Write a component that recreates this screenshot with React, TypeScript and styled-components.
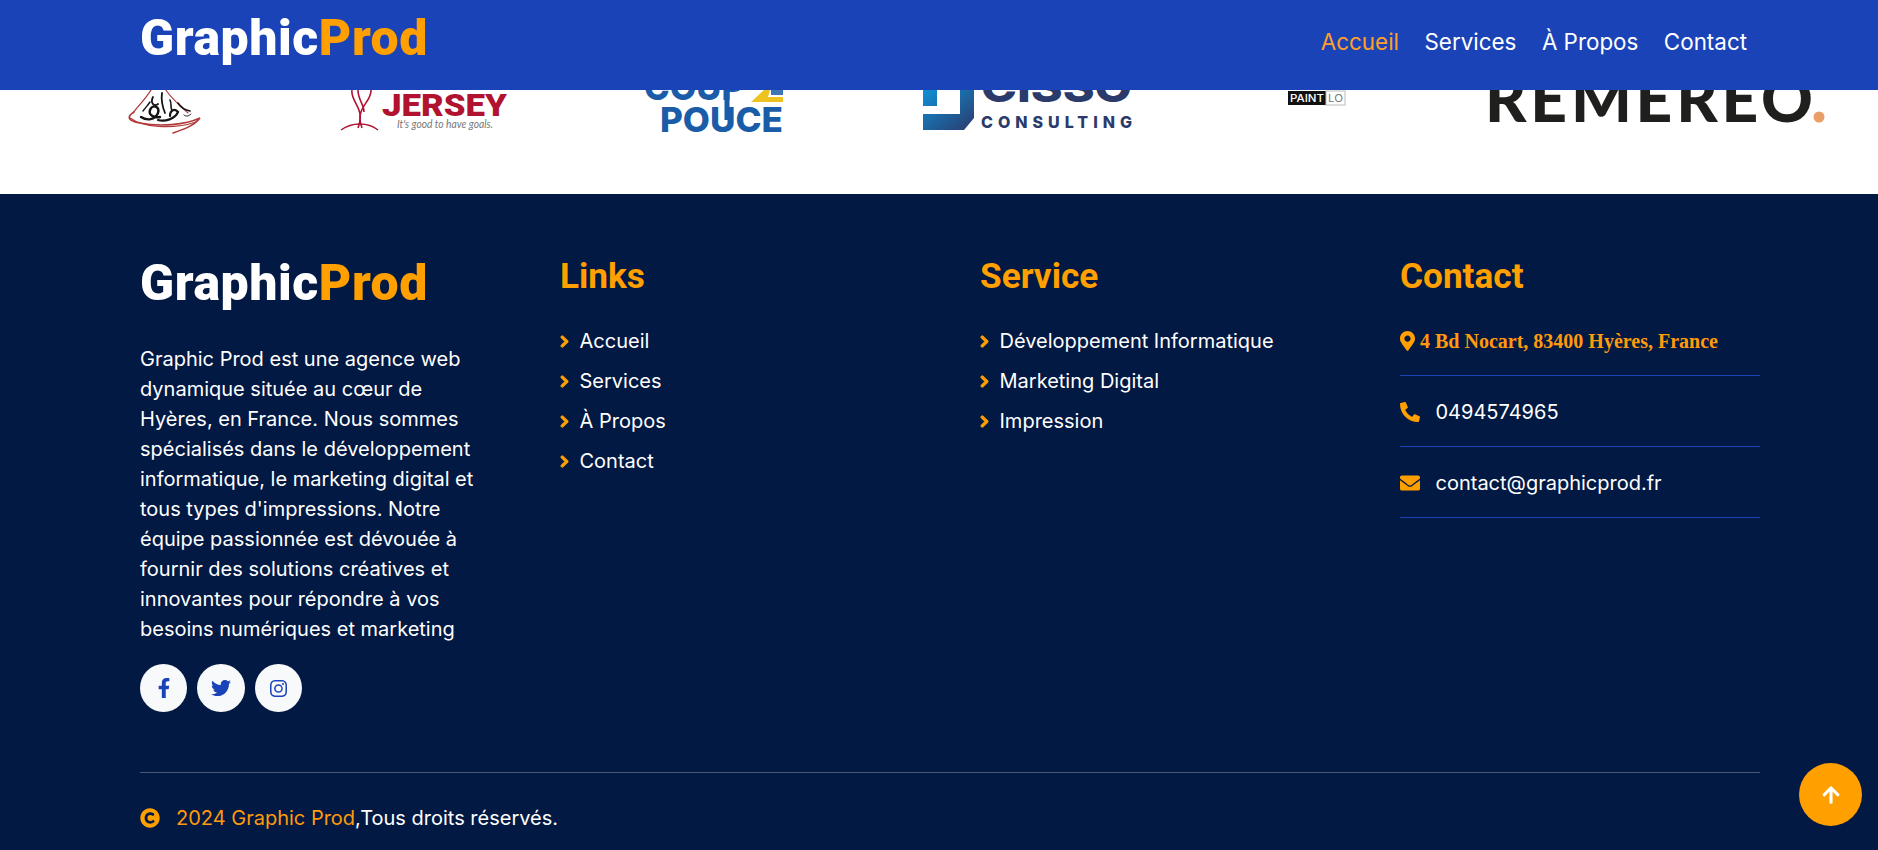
import React from "react";
import styled, { createGlobalStyle } from "styled-components";
import {
  FaChevronRight,
  FaMapMarkerAlt,
  FaPhoneAlt,
  FaEnvelope,
  FaFacebookF,
  FaTwitter,
  FaCopyright,
  FaArrowUp,
} from "react-icons/fa";
import { BsInstagram } from "react-icons/bs";

const ORANGE = "#ff9f00";
const BLUE = "#1a43b7";
const NAVY = "#021943";

const Global = createGlobalStyle`
  html, body { margin: 0; padding: 0; height: 850px; overflow: hidden; background: ${NAVY}; }
  * { box-sizing: border-box; }
  body { font-family: Inter, "Liberation Sans", sans-serif; color: #fff; }
`;

const Page = styled.div`
  width: 1878px;
  height: 850px;
  overflow: hidden;
  display: flex;
  flex-direction: column;
`;

const Header = styled.header`
  height: 90px;
  flex: none;
  background: ${BLUE};
  padding: 0 131px 0 140px;
  display: flex;
  align-items: center;
  justify-content: space-between;
  position: relative;
  z-index: 2;
`;

const Brand = styled.div`
  font-family: Roboto, sans-serif;
  font-weight: 900;
  font-size: 50px;
  line-height: 1;
  color: #fff;
  letter-spacing: 0.55px;
  span { color: ${ORANGE}; }
`;

const HeaderBrand = styled(Brand)`
  margin-top: -15px;
`;

const Nav = styled.nav`
  display: flex;
  gap: 25.5px;
`;

const NavLink = styled.a<{ $active?: boolean }>`
  font-size: 22.4px;
  line-height: 30px;
  margin-top: -7px;
  color: ${(p) => (p.$active ? "#ff9f2a" : "#fff")};
`;

const LogoStrip = styled.section`
  height: 104px;
  flex: none;
  background: #fff;
  overflow: hidden;
`;

const LogoArt = styled.svg`
  display: block;
  width: 1878px;
  height: 104px;
`;

const Footer = styled.footer`
  flex: 1;
  background: ${NAVY};
  padding: 56px 118px 0 140px;
`;

const Columns = styled.div`
  display: grid;
  grid-template-columns: repeat(4, 360px);
  column-gap: 60px;
  height: 522px;
`;

const Column = styled.div`
  display: flex;
  flex-direction: column;
  align-items: flex-start;
`;

const FooterBrand = styled(Brand)`
  margin-top: 8px;
`;

const About = styled.p`
  margin: 36px 0 0;
  width: 345px;
  font-size: 20px;
  line-height: 30px;
  color: #fff;
`;

const Socials = styled.div`
  display: flex;
  gap: 10px;
  margin-top: 20px;
`;

const SocialButton = styled.a<{ $width: number; $icon: number }>`
  width: ${(p) => p.$width}px;
  height: 48px;
  border-radius: 50%;
  background: #f8f9fa;
  color: ${BLUE};
  display: flex;
  align-items: center;
  justify-content: center;
  font-size: ${(p) => p.$icon}px;
`;

const Heading = styled.h3`
  margin: 1px 0 0;
  height: 50px;
  font-family: Roboto, sans-serif;
  font-weight: 700;
  font-size: 35.2px;
  line-height: 50px;
  color: ${ORANGE};
`;

const LinkList = styled.ul`
  list-style: none;
  margin: 25px 0 0;
  padding: 0;
  display: flex;
  flex-direction: column;
  gap: 10px;
`;

const LinkItem = styled.li`
  display: flex;
  align-items: center;
  gap: 10.5px;
  font-size: 20px;
  line-height: 30px;
  svg {
    color: ${ORANGE};
    width: 9px;
    height: 13px;
    stroke: currentColor;
    stroke-width: 50;
  }
`;

const ContactList = styled.div`
  margin-top: 25px;
  width: 100%;
`;

const ContactRow = styled.div`
  display: flex;
  align-items: center;
  height: 71px;
  padding-top: 1px;
  border-bottom: 1px solid ${BLUE};
  font-size: 20px;
  svg { color: ${ORANGE}; font-size: 20px; flex: none; }
`;

const FirstRow = styled(ContactRow)`
  height: 50px;
  padding-top: 0;
  padding-bottom: 18px;
  gap: 5px;
  font-family: "Liberation Serif", serif;
  font-weight: 700;
  font-size: 20px;
  color: #ff9a0d;
  svg { width: 15px; height: 20px; margin-top: -2px; }
`;

const IconSlot = styled.span`
  width: 35.5px;
  display: flex;
`;

const Bottom = styled.div`
  border-top: 1px solid #4a5672;
  padding-top: 30px;
  width: 1620px;
  display: flex;
  align-items: center;
  font-size: 20px;
  line-height: 30px;
  svg { color: ${ORANGE}; font-size: 20px; margin-right: 16px; }
  em { color: #ff9a0d; font-style: normal; }
`;

const ScrollTop = styled.button`
  position: fixed;
  left: 1799px;
  top: 763px;
  width: 63px;
  height: 63px;
  border: 0;
  border-radius: 50%;
  background: ${ORANGE};
  color: #fff;
  display: flex;
  align-items: center;
  justify-content: center;
  font-size: 20px;
  padding: 0;
`;

const Logos = () => (
  <LogoArt viewBox="0 90 1878 104">
    <defs>
      <linearGradient id="cissoG" x1="0" y1="0" x2="1" y2="1">
        <stop offset="0" stopColor="#0f90d6" />
        <stop offset="1" stopColor="#2b3a6b" />
      </linearGradient>
    </defs>

    {/* calligraphy */}
    <g fill="none" stroke="#b23a3a" strokeLinecap="round">
      <path d="M151 90 C145 100 137 107 133 113" strokeWidth="1.3" />
      <path d="M166 90 C170 97 178 104 188 113" strokeWidth="1.1" />
      <path d="M134 112 C126 117 128 121 140 123 C160 127 185 125 200 118 C194 126 182 130 173 133" strokeWidth="1.6" />
      <path d="M130 118 C142 127 172 130 196 122" strokeWidth="1.3" />
    </g>
    <g fill="none" stroke="#141414" strokeLinecap="round">
      <path d="M141 117 C147 121 155 120 158 113 C160 106 152 104 150 110 C148 116 156 118 160 117" strokeWidth="2.4" />
      <path d="M158 120 C165 122 175 119 178 112 C175 108 170 110 170 116" strokeWidth="2.2" />
      <path d="M153 97 C150 103 154 107 158 104 M162 93 C161 100 163 108 165 113" strokeWidth="1.8" />
      <path d="M170 100 C172 104 170 108 172 110 M178 103 C180 106 184 110 190 111" strokeWidth="1.6" />
      <path d="M143 111 C146 107 148 105 150 102" strokeWidth="1.4" />
      <path d="M184 115 C186 117 189 116 191 114" strokeWidth="1" />
    </g>

    {/* jersey */}
    <g fill="none" stroke="#b0122f" strokeWidth="1.6">
      <path d="M352 90 C350 102 366 108 358 128" />
      <path d="M371 90 C372 102 354 108 362 128" />
      <path d="M358 90 C358 100 364 104 364 112" />
      <path d="M341 130 C352 122 368 122 378 130" strokeWidth="1.4" />
    </g>
    <text x="382" y="116" fontFamily="Roboto, sans-serif" fontWeight="900" fontSize="31" fill="#b0122f" textLength="125" lengthAdjust="spacingAndGlyphs">JERSEY</text>
    <text x="397" y="128" fontFamily="Lato, sans-serif" fontStyle="italic" fontSize="11" fill="#777" textLength="96" lengthAdjust="spacingAndGlyphs">It's good to have goals.</text>

    {/* coup de pouce */}
    <text x="644" y="100" fontFamily="Inter, sans-serif" fontWeight="800" fontSize="36" fill="#1b5ca8" textLength="100" lengthAdjust="spacingAndGlyphs">COUP</text>
    <path d="M764 90 H770 L768 97 H783 V102 H751 Z" fill="#eec21f" />
    <path d="M771 90 H783 V95 H771 Z" fill="#3f76b6" />
    <text x="660" y="132" fontFamily="Inter, sans-serif" fontWeight="800" fontSize="34" fill="#1b5ca8" textLength="123" lengthAdjust="spacingAndGlyphs">POUCE</text>
    <rect x="724.5" y="90" width="5" height="30" fill="#1b5ca8" />

    {/* cisso */}
    <path d="M923 90 H937 V106 H923 Z M960 90 H974 V118 L964 130 H923 V114 H960 Z" fill="url(#cissoG)" />
    <text x="981" y="102" fontFamily="Inter, sans-serif" fontWeight="800" fontSize="40" fill="#2a3a6a" textLength="151" lengthAdjust="spacingAndGlyphs">CISSO</text>
    <text x="981" y="128" fontFamily="Inter, sans-serif" fontWeight="800" fontSize="16" fill="#2a3a6a" textLength="151" lengthAdjust="spacing">CONSULTING</text>

    {/* paint lo */}
    <rect x="1288" y="91" width="38" height="14" fill="#111" />
    <rect x="1326" y="91" width="19" height="14" fill="#fff" stroke="#bbb" strokeWidth="1" />
    <text x="1290" y="102" fontFamily="Inter, sans-serif" fontWeight="500" fontSize="10.5" fill="#fff" textLength="34" lengthAdjust="spacingAndGlyphs">PAINT</text>
    <text x="1328" y="102" fontFamily="Inter, sans-serif" fontSize="10.5" fill="#777" textLength="15" lengthAdjust="spacingAndGlyphs">LO</text>

    {/* remereo */}
    <text x="1485" y="122" fontFamily="Lato, sans-serif" fontWeight="900" fontSize="64" fill="#1f1f1d" textLength="328" lengthAdjust="spacing">REMEREO</text>
    <circle cx="1819" cy="117" r="5.5" fill="#e99e68" />
  </LogoArt>
);

const links = ["Accueil", "Services", "À Propos", "Contact"];
const services = ["Développement Informatique", "Marketing Digital", "Impression"];

export default function App() {
  return (
    <Page>
      <Global />
      <Header>
        <HeaderBrand>
          Graphic<span>Prod</span>
        </HeaderBrand>
        <Nav>
          {links.map((l, i) => (
            <NavLink key={l} $active={i === 0}>
              {l}
            </NavLink>
          ))}
        </Nav>
      </Header>
      <LogoStrip>
        <Logos />
      </LogoStrip>
      <Footer>
        <Columns>
          <Column>
            <FooterBrand>
              Graphic<span>Prod</span>
            </FooterBrand>
            <About>
              Graphic Prod est une agence web dynamique située au cœur de Hyères, en France. Nous sommes spécialisés dans le développement informatique, le marketing digital et tous types d'impressions. Notre équipe passionnée est dévouée à fournir des solutions créatives et innovantes pour répondre à vos besoins numériques et marketing
            </About>
            <Socials>
              <SocialButton $width={47} $icon={20}><FaFacebookF /></SocialButton>
              <SocialButton $width={48} $icon={20}><FaTwitter /></SocialButton>
              <SocialButton $width={47} $icon={17}><BsInstagram /></SocialButton>
            </Socials>
          </Column>
          <Column>
            <Heading>Links</Heading>
            <LinkList>
              {links.map((l) => (
                <LinkItem key={l}><FaChevronRight />{l}</LinkItem>
              ))}
            </LinkList>
          </Column>
          <Column>
            <Heading>Service</Heading>
            <LinkList>
              {services.map((l) => (
                <LinkItem key={l}><FaChevronRight />{l}</LinkItem>
              ))}
            </LinkList>
          </Column>
          <Column>
            <Heading>Contact</Heading>
            <ContactList>
              <FirstRow><FaMapMarkerAlt />4 Bd Nocart, 83400 Hyères, France</FirstRow>
              <ContactRow><IconSlot><FaPhoneAlt /></IconSlot>0494574965</ContactRow>
              <ContactRow><IconSlot><FaEnvelope /></IconSlot>contact@graphicprod.fr</ContactRow>
            </ContactList>
          </Column>
        </Columns>
        <Bottom>
          <FaCopyright />
          <em>2024 Graphic Prod</em>,Tous droits réservés.
        </Bottom>
      </Footer>
      <ScrollTop><FaArrowUp /></ScrollTop>
    </Page>
  );
}
